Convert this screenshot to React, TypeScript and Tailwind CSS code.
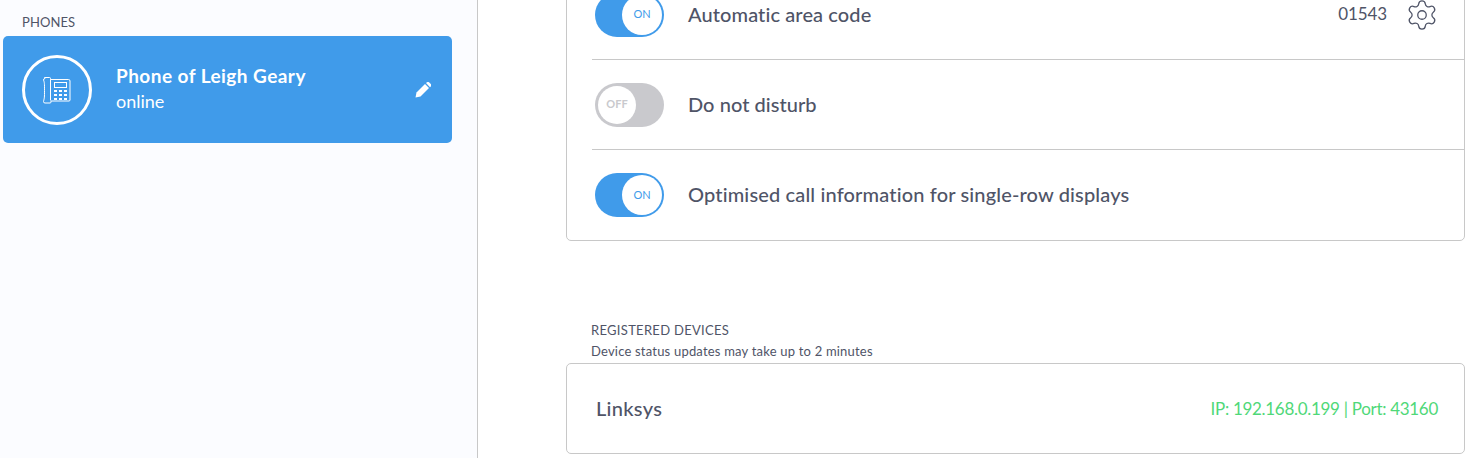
import { Settings } from 'lucide-react'

function Toggle({ on }: { on: boolean }) {
  if (on) {
    return (
      <div className="flex h-[44px] w-[69px] shrink-0 items-center justify-end rounded-full bg-[#409bea] pr-[2px]">
        <div className="flex h-[40px] w-[40px] items-center justify-center rounded-full bg-white text-[11px] text-[#409bea]">
          ON
        </div>
      </div>
    )
  }
  return (
    <div className="flex h-[44px] w-[69px] shrink-0 items-center justify-start rounded-full bg-[#c9c9cd] pl-[3px]">
      <div className="flex h-[38px] w-[38px] items-center justify-center rounded-full bg-white text-[11px] font-bold text-[#c9c9cd]">
        OFF
      </div>
    </div>
  )
}

function PhoneIcon() {
  return (
    <svg width="30" height="28" viewBox="0 0 30 28" fill="none" stroke="white" strokeWidth="1">
      <path d="M2.500 1.500h5a1 1 0 0 1 1 1v1h18a1.500 1.500 0 0 1 1.500 1.500v19a1 1 0 0 1-1 1h-18v1a1 1 0 0 1-1 1h-5a1.500 1.500 0 0 1-1.500-1.500c1-4 1-4 1-11s0-8-1-10.500a1.500 1.500 0 0 1 1.500-1.500z" />
      <path d="M8.500 3.500v21" />
      <rect x="12.500" y="6.500" width="12" height="5" />
      <g fill="white" stroke="none">
        <rect x="12" y="14" width="3" height="2" />
        <rect x="17" y="14" width="3" height="2" />
        <rect x="22" y="14" width="3" height="2" />
        <rect x="12" y="18" width="3" height="2" />
        <rect x="17" y="18" width="3" height="2" />
        <rect x="22" y="18" width="3" height="2" />
        <rect x="12" y="22" width="3" height="2" />
        <rect x="17" y="22" width="3" height="2" />
        <rect x="22" y="22" width="3" height="2" />
      </g>
    </svg>
  )
}

function PencilIcon() {
  return (
    <svg width="16" height="16" viewBox="0 0 16 16" fill="white">
      <path d="M0.500 15.500l1-5 8.500-8.500 4 4-8.500 8.500z" />
      <path d="M11 1l1-0.700a1.500 1.500 0 0 1 2 0l2 2a1.500 1.500 0 0 1 0 2l-1 1z" />
    </svg>
  )
}

export default function App() {
  return (
    <div className="flex h-[458px] w-[1471px] overflow-hidden bg-white font-['Lato',sans-serif] text-[#4f5467]">
      <aside className="h-full w-[478px] shrink-0 border-r border-[#c8c8c8] bg-[#fbfcff] pl-[3px] pt-[15px]">
        <h2 className="mb-[7px] pl-[19px] text-[13px] leading-[14px] tracking-[0.1px]">PHONES</h2>
        <div className="flex h-[107px] w-[449px] items-center rounded-[5px] bg-[#409bea] pl-[19px] pr-[21px] text-white">
          <div className="flex h-[70px] w-[70px] shrink-0 items-center justify-center rounded-full border-[3px] border-white">
            <PhoneIcon />
          </div>
          <div className="ml-[24px] flex-1 -translate-y-[2px]">
            <div className="text-[19px] font-bold leading-[24px] tracking-[0.45px]">Phone of Leigh Geary</div>
            <div className="mt-[3px] text-[18px] leading-[20px]">online</div>
          </div>
          <PencilIcon />
        </div>
      </aside>

      <main className="flex-1 pl-[88px] pr-[6px]">
        <section className="-mt-[31px] rounded-b-[5px] border border-[#c8c8c8] pl-[25px]">
          <div className="flex h-[90px] items-center border-b border-[#c8c8c8] pl-[3px] pr-[27px]">
            <Toggle on />
            <span className="mb-[2px] ml-[24px] flex-1 text-[20px] font-medium tracking-[0.1px]">Automatic area code</span>
            <span className="mb-[2px] text-[17px] tracking-[-0.1px]">01543</span>
            <Settings size={34} strokeWidth={0.9} className="-mr-[2px] ml-[18px]" />
          </div>
          <div className="flex h-[90px] items-center border-b border-[#c8c8c8] pl-[3px]">
            <Toggle on={false} />
            <span className="mb-[2px] ml-[24px] text-[20px] font-medium tracking-[0.05px]">Do not disturb</span>
          </div>
          <div className="flex h-[90px] items-center pl-[3px]">
            <Toggle on />
            <span className="mb-[2px] ml-[24px] text-[20px] font-medium tracking-[0.15px]">Optimised call information for single-row displays</span>
          </div>
        </section>

        <h2 className="mt-[81px] pl-[25px] text-[13px] leading-[16px] tracking-[0.3px]">REGISTERED DEVICES</h2>
        <p className="mt-[6px] pl-[25px] text-[13px] leading-[14px] tracking-[0.2px]">Device status updates may take up to 2 minutes</p>
        <section className="mt-[5px] flex h-[91px] items-center justify-between rounded-[5px] border border-[#c8c8c8] pl-[29px] pr-[26px]">
          <span className="mb-[2px] text-[20px] font-medium tracking-[0.3px]">Linksys</span>
          <span className="text-[17px] tracking-[-0.3px] text-[#4fd878]">IP: 192.168.0.199 | Port: 43160</span>
        </section>
      </main>
    </div>
  )
}
